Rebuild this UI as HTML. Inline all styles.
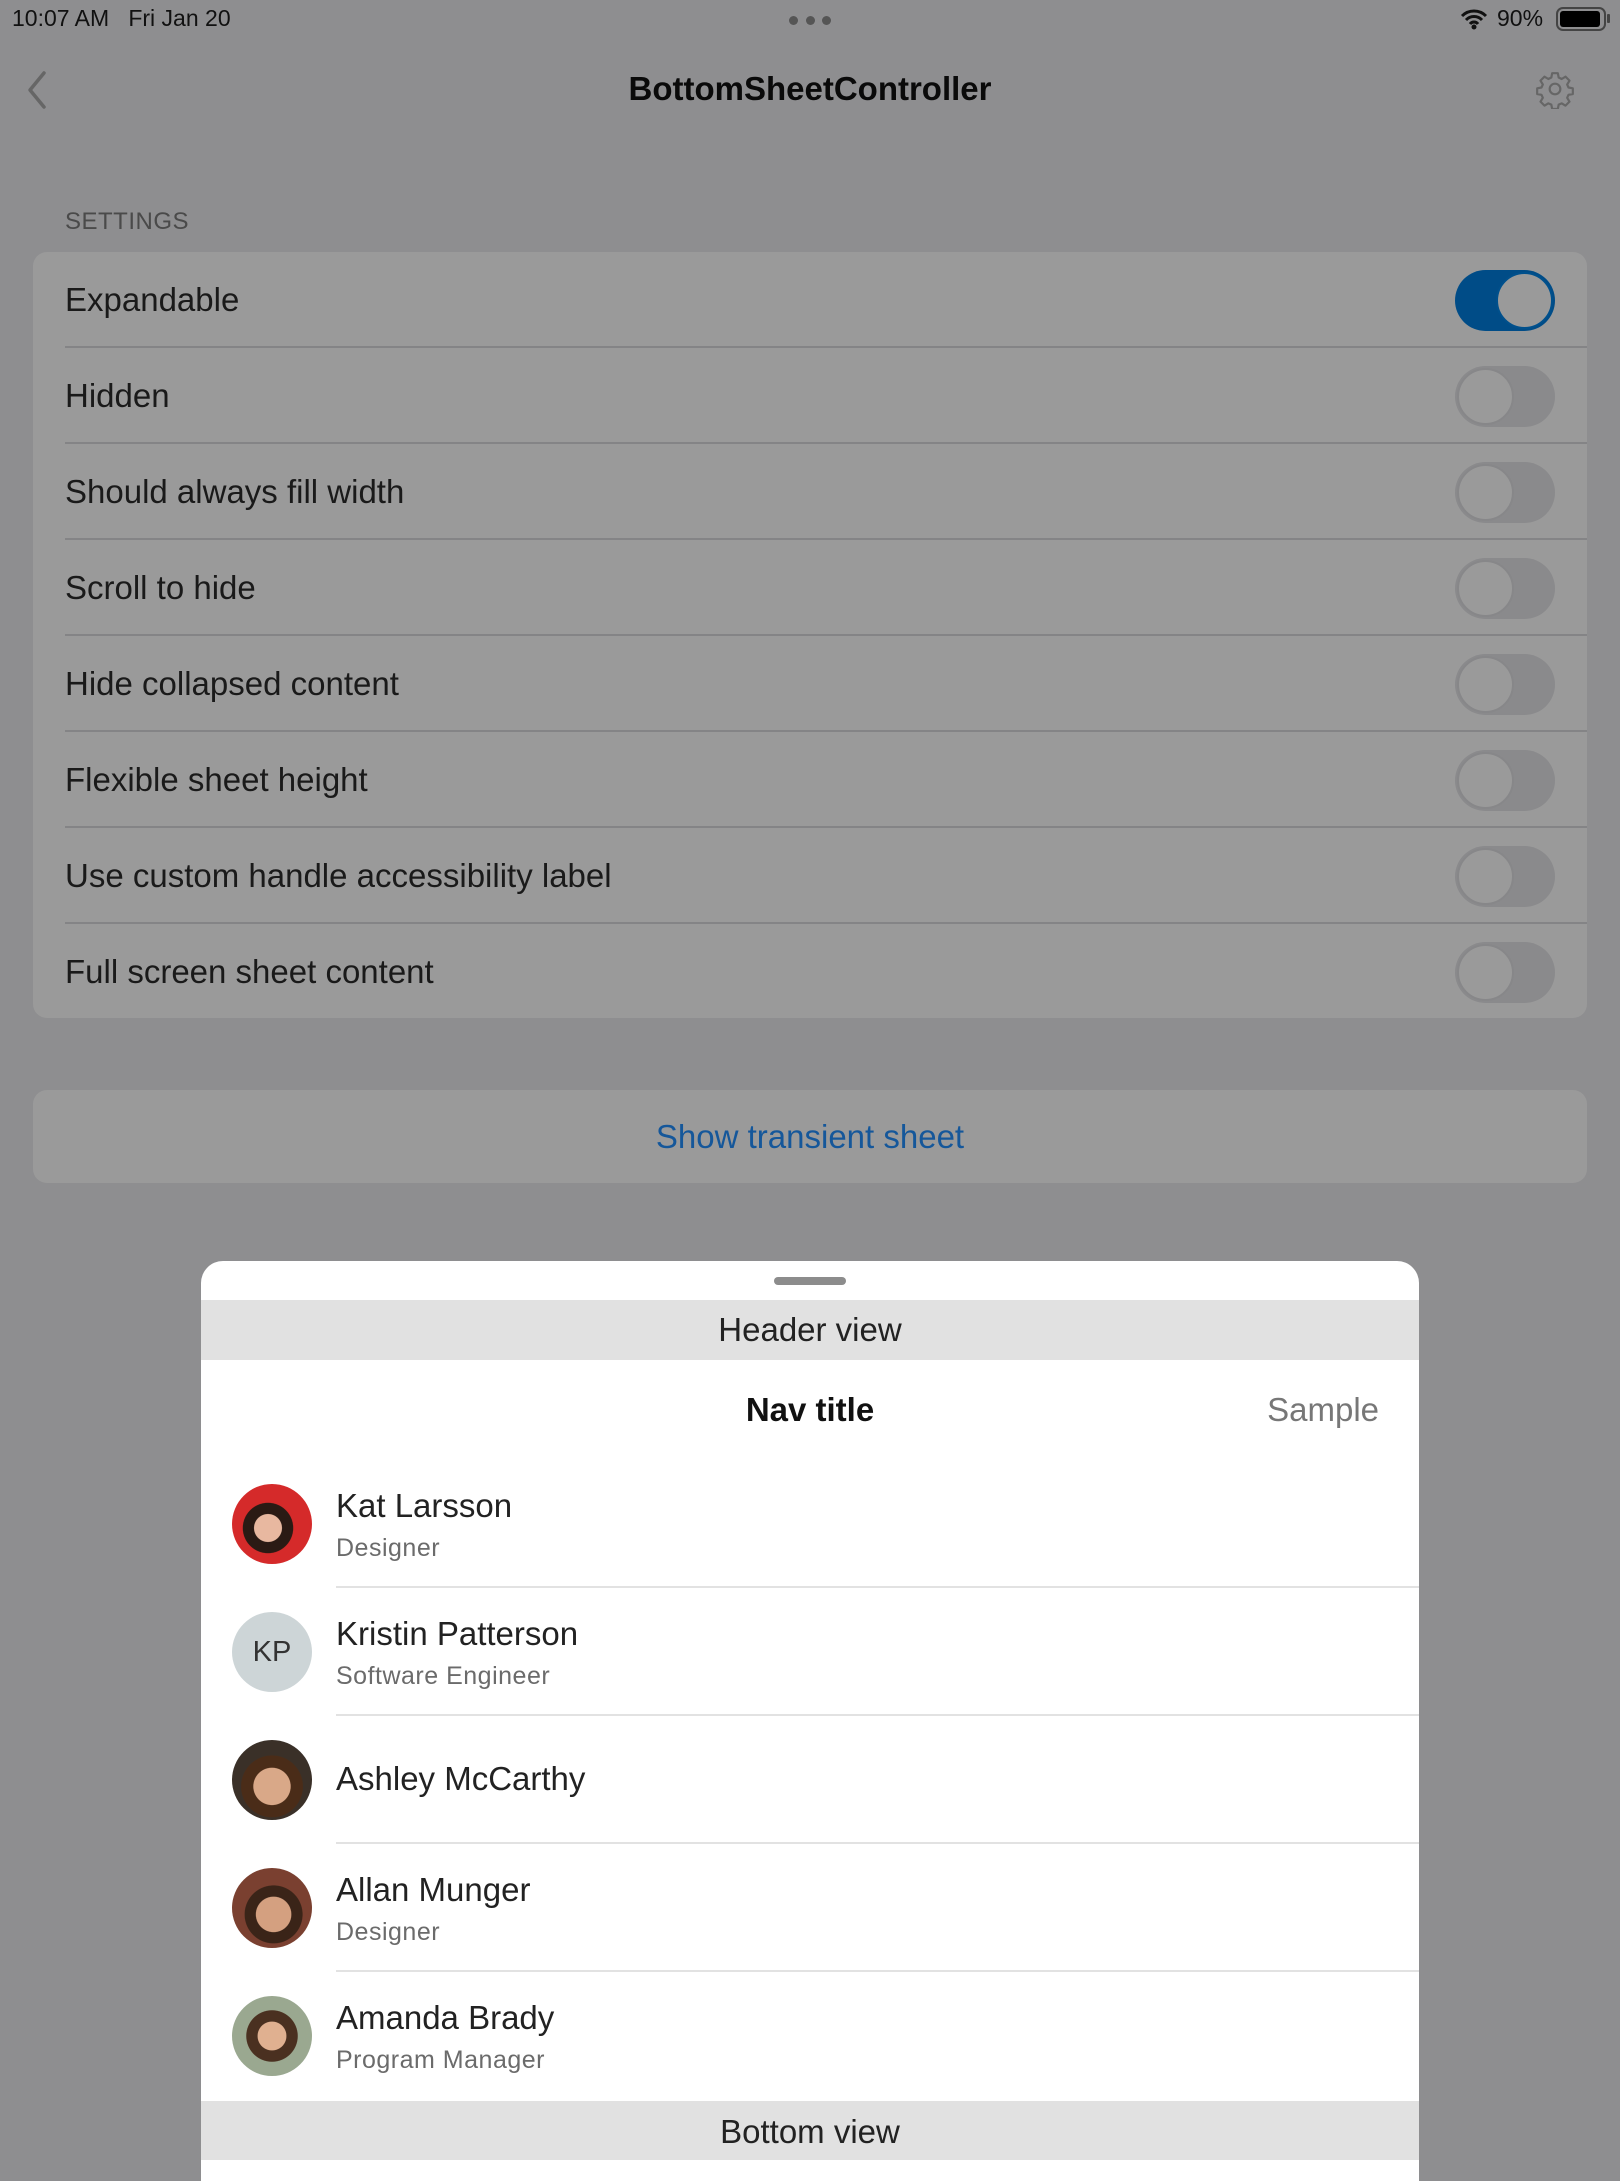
<!DOCTYPE html>
<html><head><meta charset="utf-8"><style>
*{margin:0;padding:0;box-sizing:border-box}
body{width:1620px;height:2160px;background:#8e8e90;font-family:"Liberation Sans",sans-serif;position:relative;overflow:hidden;color:#111}
.a{position:absolute}
.row{position:absolute;left:33px;width:1554px;height:96px}
.row span{position:absolute;left:32px;top:0;line-height:96px;font-size:33px;color:#1a1a1a}
.row .sep{position:absolute;left:32px;right:0;bottom:0;height:2px;background:#848486}
.tg{position:absolute;left:1422px;top:18px;width:100px;height:61px;border-radius:31px;background:#8a8a8c}
.tg i{position:absolute;left:2px;top:2px;width:57px;height:57px;border-radius:50%;background:#9a9a9a;border:2px solid #878789}
.tg.on{background:#004c87}
.tg.on i{left:41px;border-color:#00508c}
.li{position:absolute;left:201px;width:1218px;height:128px}
.av{position:absolute;left:31px;top:24px;width:80px;height:80px;border-radius:50%;overflow:hidden}
.nm{position:absolute;left:135px;font-size:33px;color:#222}
.sb{position:absolute;left:135px;font-size:25px;color:#6b6b6b;letter-spacing:.5px}
.ls{position:absolute;left:135px;right:0;bottom:0;height:2px;background:#e2e2e2}
</style></head><body>
<div class="a" style="left:12px;top:5px;font-size:23px;color:#111">10:07 AM&nbsp;&nbsp;&nbsp;Fri Jan 20</div>
<div class="a" style="left:789px;top:16px;width:42px;height:9px;display:flex;justify-content:space-between"><i style="width:9px;height:9px;border-radius:50%;background:#555"></i><i style="width:9px;height:9px;border-radius:50%;background:#555"></i><i style="width:9px;height:9px;border-radius:50%;background:#555"></i></div>
<svg class="a" style="left:1460px;top:8px" width="28" height="22" viewBox="0 0 28 22"><path d="M2 8a17 17 0 0 1 24 0M6 12a11 11 0 0 1 16 0M10 16a5 5 0 0 1 8 0" stroke="#111" stroke-width="3" fill="none"/><circle cx="14" cy="19" r="2.5" fill="#111"/></svg>
<div class="a" style="left:1497px;top:5px;font-size:23px">90%</div>
<div class="a" style="left:1556px;top:7px;width:50px;height:24px;border:2px solid #444;border-radius:7px;padding:2px"><div style="width:40px;height:16px;background:#000;border-radius:3px"></div></div>
<div class="a" style="left:1607px;top:14px;width:3px;height:9px;background:#444;border-radius:1px"></div>
<svg class="a" style="left:24px;top:70px" width="26" height="40" viewBox="0 0 26 40"><path d="M20 3L6 20l14 17" stroke="#666" stroke-width="3.5" fill="none" stroke-linecap="round" stroke-linejoin="round"/></svg>
<div class="a" style="left:0;width:1620px;top:70px;text-align:center;font-size:33px;font-weight:bold;color:#0a0a0a">BottomSheetController</div>
<svg class="a" style="left:1535px;top:69px" width="40" height="40" viewBox="0 0 24 24"><circle cx="12" cy="12" r="3.2" stroke="#666" stroke-width="1.3" fill="none"/><path d="M10.3 2.5h3.4l.5 2.6 1.8.9 2.3-1.4 2.4 2.4-1.4 2.3.8 1.8 2.6.5v3.4l-2.6.5-.8 1.8 1.4 2.3-2.4 2.4-2.3-1.4-1.8.8-.5 2.6h-3.4l-.5-2.6-1.8-.8-2.3 1.4-2.4-2.4 1.4-2.3-.8-1.8-2.6-.5v-3.4l2.6-.5.8-1.8-1.4-2.3 2.4-2.4 2.3 1.4 1.8-.9z" stroke="#666" stroke-width="1.3" fill="none" stroke-linejoin="round"/></svg>
<div class="a" style="left:65px;top:208px;font-size:24px;color:#4a4a4a;letter-spacing:.5px">SETTINGS</div>
<div class="a" style="left:33px;top:252px;width:1554px;height:766px;background:#9a9a9a;border-radius:14px"></div>
<div class="row" style="top:252px"><span>Expandable</span><div class="tg on"><i></i></div><div class="sep"></div></div>
<div class="row" style="top:348px"><span>Hidden</span><div class="tg"><i></i></div><div class="sep"></div></div>
<div class="row" style="top:444px"><span>Should always fill width</span><div class="tg"><i></i></div><div class="sep"></div></div>
<div class="row" style="top:540px"><span>Scroll to hide</span><div class="tg"><i></i></div><div class="sep"></div></div>
<div class="row" style="top:636px"><span>Hide collapsed content</span><div class="tg"><i></i></div><div class="sep"></div></div>
<div class="row" style="top:732px"><span>Flexible sheet height</span><div class="tg"><i></i></div><div class="sep"></div></div>
<div class="row" style="top:828px"><span>Use custom handle accessibility label</span><div class="tg"><i></i></div><div class="sep"></div></div>
<div class="row" style="top:924px"><span>Full screen sheet content</span><div class="tg"><i></i></div></div>
<div class="a" style="left:33px;top:1090px;width:1554px;height:93px;background:#9a9a9a;border-radius:14px;text-align:center;line-height:93px;font-size:33px;color:#15579a">Show transient sheet</div>
<div class="a" style="left:201px;top:1261px;width:1218px;height:920px;background:#fff;border-radius:22px 22px 0 0;overflow:hidden">
<div class="a" style="left:573px;top:16px;width:72px;height:8px;border-radius:4px;background:#8c8c8c"></div>
<div class="a" style="left:0;top:39px;width:1218px;height:60px;background:#e1e1e1;text-align:center;line-height:60px;font-size:33px;color:#222">Header view</div>
<div class="a" style="left:0;top:130px;width:1218px;text-align:center;font-size:33px;font-weight:bold;color:#111">Nav title</div>
<div class="a" style="right:40px;top:130px;font-size:33px;color:#777">Sample</div>
</div>
<div class="li" style="top:1460px"><div class="av" style="background:radial-gradient(circle at 45% 55%,#e8b8a0 0 22%,#2a1a14 23% 40%,#d52a2a 41%)"></div><div class="nm" style="top:27px">Kat Larsson</div><div class="sb" style="top:74px">Designer</div><div class="ls"></div></div>
<div class="li" style="top:1588px"><div class="av" style="background:#cdd5d7;text-align:center;line-height:80px;font-size:29px;color:#333">KP</div><div class="nm" style="top:27px">Kristin Patterson</div><div class="sb" style="top:74px">Software Engineer</div><div class="ls"></div></div>
<div class="li" style="top:1716px"><div class="av" style="background:radial-gradient(circle at 50% 58%,#d9a888 0 30%,#4a2c18 31% 50%,#3a3028 51%)"></div><div class="nm" style="top:44px">Ashley McCarthy</div><div class="ls"></div></div>
<div class="li" style="top:1844px"><div class="av" style="background:radial-gradient(circle at 52% 58%,#d4a080 0 28%,#3a2418 29% 46%,#7a4030 47%)"></div><div class="nm" style="top:27px">Allan Munger</div><div class="sb" style="top:74px">Designer</div><div class="ls"></div></div>
<div class="li" style="top:1972px"><div class="av" style="background:radial-gradient(circle at 50% 50%,#e0b090 0 25%,#4a3020 26% 45%,#9aa890 46%)"></div><div class="nm" style="top:27px">Amanda Brady</div><div class="sb" style="top:74px">Program Manager</div></div>
<div class="a" style="left:201px;top:2101px;width:1218px;height:59px;background:#e1e1e1;text-align:center;line-height:62px;font-size:33px;color:#222">Bottom view</div>
</body></html>
